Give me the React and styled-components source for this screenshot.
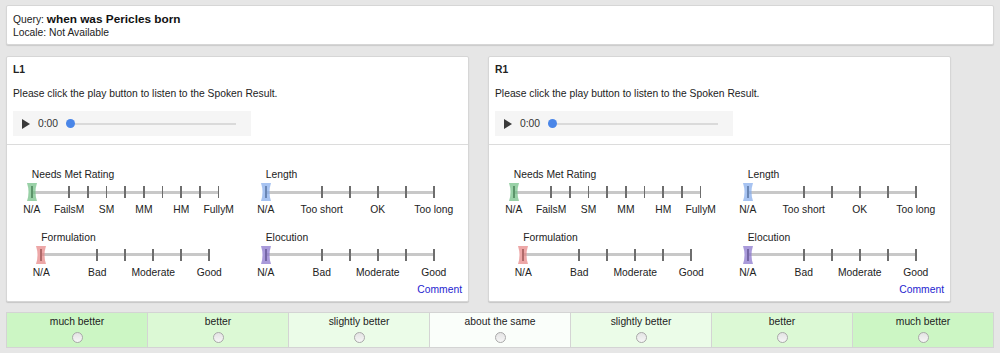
import React from "react";
import styled, { createGlobalStyle } from "styled-components";

const GlobalStyle = createGlobalStyle`
  html, body {
    margin: 0;
    padding: 0;
    background: #e6e6e6;
  }
  body {
    font-family: "Liberation Sans", Arial, sans-serif;
    font-size: 10.3px;
    color: #222;
  }
`;

const SLIDERS = [
  {
    name: "Needs Met Rating",
    color: "rgba(110, 190, 130, 0.7)",
    step: 18.7,
    labels: ["N/A", "FailsM", "SM", "MM", "HM", "FullyM"],
  },
  {
    name: "Length",
    color: "rgba(130, 170, 235, 0.7)",
    step: 28,
    labels: ["N/A", "Too short", "OK", "Too long"],
  },
  {
    name: "Formulation",
    color: "rgba(230, 130, 130, 0.7)",
    step: 28,
    labels: ["N/A", "Bad", "Moderate", "Good"],
  },
  {
    name: "Elocution",
    color: "rgba(140, 120, 205, 0.75)",
    step: 28,
    labels: ["N/A", "Bad", "Moderate", "Good"],
  },
];

const CHOICES = [
  { text: "much better", bg: "#ccf6c4" },
  { text: "better", bg: "#dcf9d5" },
  { text: "slightly better", bg: "#ebfce8" },
  { text: "about the same", bg: "#fafefa" },
  { text: "slightly better", bg: "#ebfce8" },
  { text: "better", bg: "#dcf9d5" },
  { text: "much better", bg: "#ccf6c4" },
];

const Slider = ({ name, color, step, labels }) => {
  const positions = (labels.length - 1) * 2 + 1;
  const width = step * (positions - 1);
  return (
    <SliderBlock style={{ width }}>
      <SliderName>{name}</SliderName>
      <TrackArea>
        <Ticks>
          {Array.from({ length: positions }).map((_, i) => (
            <Tick key={i} $hidden={i === 1} $first={i === 0} />
          ))}
        </Ticks>
        <Handle width="10" height="18" viewBox="0 0 10 18">
          <path d="M0 0 L10 0 Q7 9 10 18 L0 18 Q3 9 0 0 Z" fill={color} />
        </Handle>
      </TrackArea>
      <TickLabels>
        {labels.map((l, i) => (
          <TickLabel key={i}>{l}</TickLabel>
        ))}
      </TickLabels>
    </SliderBlock>
  );
};

const ResultCard = ({ title }) => (
  <Card>
    <CardHead>
      <CardTitle>{title}</CardTitle>
      <Instruction>
        Please click the play button to listen to the Spoken Result.
      </Instruction>
      <Player>
        <PlayIcon />
        <Time>0:00</Time>
        <Progress>
          <Knob />
        </Progress>
      </Player>
    </CardHead>
    <CardBody>
      <SliderGrid>
        {SLIDERS.map((s) => (
          <Slider key={s.name} {...s} />
        ))}
      </SliderGrid>
      <CommentRow>
        <CommentLink href="#">Comment</CommentLink>
      </CommentRow>
    </CardBody>
  </Card>
);

export default function App() {
  return (
    <>
      <GlobalStyle />
      <Page>
        <QueryBox>
          <QueryLine>
            Query: <strong>when was Pericles born</strong>
          </QueryLine>
          <LocaleLine>Locale: Not Available</LocaleLine>
        </QueryBox>
        <Cards>
          <ResultCard title="L1" />
          <ResultCard title="R1" />
        </Cards>
        <ChoiceBar>
          {CHOICES.map((c, i) => (
            <Choice key={i} $bg={c.bg}>
              <ChoiceText>{c.text}</ChoiceText>
              <Radio />
            </Choice>
          ))}
        </ChoiceBar>
      </Page>
    </>
  );
}

const Page = styled.div`
  padding: 5px 6px 6px;
  display: flex;
  flex-direction: column;
`;

const QueryBox = styled.div`
  box-sizing: border-box;
  width: 988px;
  height: 40px;
  padding: 6px;
  background: #fff;
  border: 1px solid #d6d6d6;
  border-radius: 2px;
  box-shadow: 0 1px 1px rgba(0, 0, 0, 0.12);
`;

const QueryLine = styled.div`
  line-height: 14px;
  strong {
    font-size: 11.8px;
    font-weight: bold;
    color: #111;
  }
`;

const LocaleLine = styled.div`
  line-height: 12px;
`;

const Cards = styled.div`
  display: flex;
  gap: 19px;
  margin-top: 11px;
`;

const Card = styled.div`
  box-sizing: border-box;
  width: 463px;
  height: 246px;
  background: #fff;
  border: 1px solid #d6d6d6;
  border-radius: 2px;
  box-shadow: 0 1px 1px rgba(0, 0, 0, 0.14);
`;

const CardHead = styled.div`
  padding: 6px 6px 8px;
  border-bottom: 1px solid #dcdcdc;
`;

const CardTitle = styled.div`
  font-weight: bold;
  line-height: 13px;
`;

const Instruction = styled.div`
  margin-top: 12px;
  line-height: 12px;
`;

const Player = styled.div`
  display: flex;
  align-items: center;
  width: 238px;
  height: 25px;
  margin-top: 11px;
  padding-left: 9px;
  box-sizing: border-box;
  background: #f5f5f5;
`;

const PlayIcon = styled.span`
  width: 0;
  height: 0;
  border-top: 5px solid transparent;
  border-bottom: 5px solid transparent;
  border-left: 8px solid #3a3a3a;
`;

const Time = styled.span`
  margin-left: 8px;
  color: #333;
  line-height: 12px;
`;

const Progress = styled.div`
  display: flex;
  align-items: center;
  width: 166px;
  height: 9px;
  margin-left: 12px;
  background: linear-gradient(#dadada, #dadada) center / 100% 2px no-repeat;
`;

const Knob = styled.span`
  width: 9px;
  height: 9px;
  margin-left: -4.5px;
  border-radius: 50%;
  background: #4a86e8;
`;

const CardBody = styled.div`
  padding: 24px 6px 0;
`;

const SliderGrid = styled.div`
  display: grid;
  grid-template-columns: 1fr 1fr;
  row-gap: 15.4px;
`;

const SliderBlock = styled.div`
  justify-self: center;
  display: flex;
  flex-direction: column;
`;

const SliderName = styled.div`
  line-height: 12px;
  white-space: nowrap;
`;

const TrackArea = styled.div`
  position: relative;
  height: 20px;
  margin-top: 1.3px;
  background: linear-gradient(#c8c8c8, #c8c8c8) center / 100% 3px no-repeat;
`;

const Ticks = styled.div`
  display: flex;
  justify-content: space-between;
  align-items: center;
  height: 100%;
`;

const Tick = styled.span`
  width: 1.6px;
  height: 12px;
  margin: 0 -0.8px;
  background: ${(p) => (p.$first ? "#333" : "#6e6e6e")};
  visibility: ${(p) => (p.$hidden ? "hidden" : "visible")};
`;

const Handle = styled.svg`
  position: absolute;
  left: -5px;
  top: 1px;
`;

const TickLabels = styled.div`
  display: flex;
  justify-content: space-between;
  margin-top: 2px;
  line-height: 12px;
`;

const TickLabel = styled.span`
  width: 0;
  display: flex;
  justify-content: center;
  white-space: nowrap;
`;

const CommentRow = styled.div`
  display: flex;
  justify-content: flex-end;
  margin-top: 5.3px;
  line-height: 12px;
`;

const CommentLink = styled.a`
  color: #2525d0;
  text-decoration: none;
`;

const ChoiceBar = styled.div`
  display: flex;
  width: 988px;
  margin-top: 10px;
  border: 1px solid #d4d4d4;
  box-sizing: border-box;
`;

const Choice = styled.div`
  flex: 1;
  display: flex;
  flex-direction: column;
  align-items: center;
  padding: 3px 0 4px;
  background: ${(p) => p.$bg};
  & + & {
    border-left: 1px solid #d4d4d4;
  }
`;

const ChoiceText = styled.span`
  line-height: 12px;
  color: #222;
`;

const Radio = styled.span`
  box-sizing: border-box;
  width: 11px;
  height: 11px;
  margin-top: 4px;
  border-radius: 50%;
  border: 1px solid #a9a9a9;
  background: linear-gradient(#e4e4e4, #f6f6f6);
`;
